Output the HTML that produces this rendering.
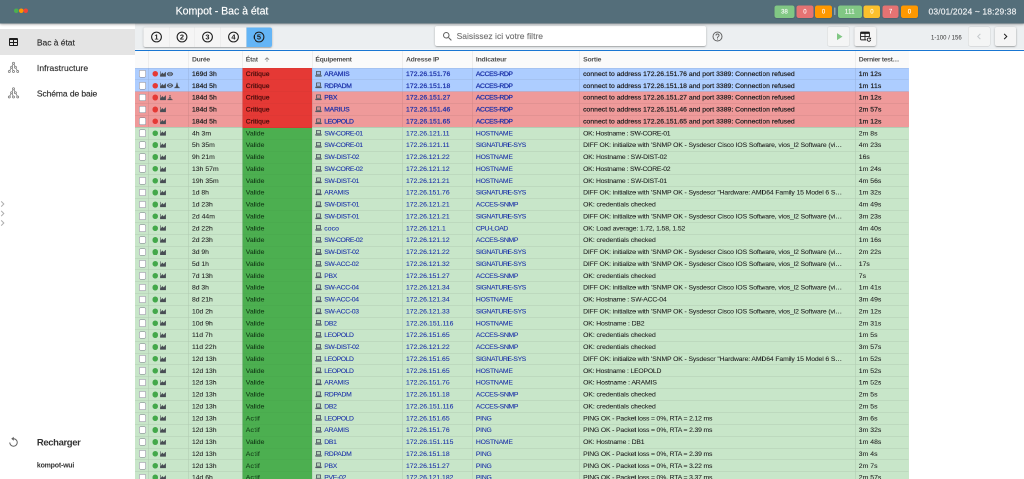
<!DOCTYPE html><html lang="fr"><head><meta charset="utf-8"><title>Kompot - Bac à état</title><style>html,body{margin:0;padding:0;background:#fff}
body{width:1024px;height:479px;overflow:hidden;position:relative}
#app{position:absolute;left:0;top:0;width:2048px;height:958px;transform:scale(.5);transform-origin:0 0;will-change:transform;overflow:hidden;background:#fff;font-family:"Liberation Sans",sans-serif;color:#1d1d1d;-webkit-font-smoothing:antialiased}
#app *{box-sizing:border-box}
.ic{display:block;flex:none}
i{display:block;font-style:normal}
span{white-space:pre}
/* header */
.hdr{position:absolute;left:0;top:0;width:2048px;height:47.4px;background:#546e7a;box-shadow:0 1px 4px rgba(0,0,0,.3),0 2px 7px rgba(0,0,0,.16)}
.hd{position:absolute;top:17.3px;width:9px;height:9px;border-radius:50%}
.title{position:absolute;left:351.2px;top:0;height:44px;line-height:44px;font-size:21.2px;color:#fff;-webkit-text-stroke:.3px;word-spacing:0}
.bdg{position:absolute;top:10.5px;height:25.7px;line-height:25.7px;border-radius:4.5px;text-align:center;font-size:12px;color:rgba(255,255,255,.9);-webkit-text-stroke:.3px;box-shadow:0 1px 3px rgba(0,0,0,.18)}
.sep{position:absolute;left:1668.3px;top:15px;width:3px;height:14.5px;background:#90a4ae;border-radius:1px}
.date{position:absolute;left:1857px;top:.7px;-webkit-text-stroke:.35px;height:46px;line-height:46px;font-size:17px;color:#eceff1}
/* drawer */
.drawer{position:absolute;left:0;top:47.4px;width:270px;height:911px;background:#fff}
.nav{position:absolute;left:0;top:11px;width:270px}
.nitem{height:51.2px;display:flex;align-items:center;position:relative}
.nitem.act{background:#e4e4e4}
.nic{position:absolute;left:15px;top:50%;margin-top:-12px;width:24px;height:24px}
.ntx{position:absolute;left:73.8px;top:1.2px;-webkit-text-stroke:.3px;line-height:51px;font-size:17px;color:#2e2e2e}
.minichev{position:absolute;left:-1px}
.reload{position:absolute;left:0;top:811px;width:270px;height:52px}
.rtx{position:absolute;left:73.8px;top:.9px;line-height:52px;font-size:19px;font-weight:700;color:#333}
.appname{position:absolute;left:73.8px;top:873px;line-height:20px;font-size:14px;font-weight:700;color:#333}
/* toolbar */
.toolbar{position:absolute;left:270px;top:47.4px;width:1778px;height:52px;background:#eceff1}
.bline{position:absolute;left:270px;top:99.7px;width:1778px;height:2.2px;background:#1976d2}
.bgroup{position:absolute;left:17.4px;top:7.2px;height:39.2px;width:256.2px;display:flex;border-radius:4px;background:#f5f5f5;box-shadow:0 1px 5px rgba(0,0,0,.2),0 2px 2px rgba(0,0,0,.14),0 3px 1px -2px rgba(0,0,0,.12);overflow:hidden}
.gb{flex:1;display:flex;align-items:center;justify-content:center;border-right:1px solid #e4e4e4}
.gb:last-child{border-right:0}
.gb.on{background:#64b5f6}
.search{position:absolute;left:600px;top:5.1px;width:542px;height:40px;background:#fff;border-radius:4px;box-shadow:0 1px 5px rgba(0,0,0,.2),0 2px 2px rgba(0,0,0,.14),0 3px 1px -2px rgba(0,0,0,.12);display:flex;align-items:center;padding:1.8px 0 0 13px}
.ph{font-size:17px;color:#6f6f6f;margin-left:6.2px;-webkit-text-stroke:.25px}
.help{position:absolute;left:1152.6px;top:13.6px;width:24px;height:24px}
.tb{position:absolute;top:6.4px;height:38.7px;border-radius:4px;background:#f5f5f5;box-shadow:0 1px 5px rgba(0,0,0,.2),0 2px 2px rgba(0,0,0,.14),0 3px 1px -2px rgba(0,0,0,.12);display:flex;align-items:center;justify-content:center}
.tb.flat{top:7.1px;height:38px;background:#f4f5f5;box-shadow:0 0 0 1px rgba(0,0,0,.1),0 1px 2px rgba(0,0,0,.06)}
.tb{margin-left:-270px}
.pag{position:absolute;left:1592px;top:17.4px;line-height:20px;font-size:12px;color:#333}
/* table */
.tbl{position:absolute;left:270px;top:102px;width:1547.5px;height:856px;background:linear-gradient(to bottom,#fafafa 0,#fafafa 33.6px,#adcdff 33.6px,#adcdff 81.10px,#ef9a9a 81.10px,#ef9a9a 152.35px,#c8e6c9 152.35px)}
.thead{display:flex;height:33.6px}
.th{flex:none;height:33.6px;line-height:33px;padding-left:6px;font-size:13.62px;font-weight:700;color:#505050;border-left:1px solid rgba(0,0,0,.1);display:flex;align-items:center;overflow:hidden}
.th:first-child,.td:first-child{border-left:0}
.tr{display:flex;height:23.75px}
.td{flex:none;height:23.75px;line-height:23.75px;padding-left:6px;font-size:13.62px;border-left:1px solid rgba(0,0,0,.13);border-top:1px solid rgba(0,0,0,.11);display:flex;align-items:center;overflow:hidden;color:#1f1f1f}
.cbx{padding-left:7.5px}
.cb{width:14.4px;height:14.4px;border:1.7px solid #7c7c8c;border-radius:3px;background:#fff}
.dot{width:11.4px;height:11.4px;border-radius:50%;margin-right:3px;flex:none}
.dr{background:#e53935}.dg{background:#43a84a}
.ecrit{color:#4a0d0c;border-top-color:rgba(0,0,0,.05)}
.eok{color:#123a16;border-top-color:rgba(0,0,0,.05)}
.td{-webkit-text-stroke:.15px;padding-bottom:.6px}
.td.lk{color:#1a30a8}
.crit .td{-webkit-text-stroke:.45px}
.lap{margin-right:4.4px;margin-left:-.8px}
.ecol{position:absolute;left:214.5px;top:33.6px;width:139.3px;height:823px;background:linear-gradient(to bottom,#e53935 0,#e53935 118.75px,#4caf50 118.75px)}
.thead,.tr{position:relative}
.ics{padding-left:7px}
</style></head><body><div id="app"><aside class="drawer"><div class="nav"><div class="nitem act"><div class="nic"><svg class="ic" width="24" height="24" viewBox="0 0 24 24" ><path fill="#1d1d1d" d="M5,4H19A2,2 0 0,1 21,6V18A2,2 0 0,1 19,20H5A2,2 0 0,1 3,18V6A2,2 0 0,1 5,4M5,8V12H11V8H5M13,8V12H19V8H13M5,14V18H11V14H5M13,14V18H19V14H13Z"/></svg></div><span class="ntx" style="letter-spacing:-0.075px;">Bac à état</span></div><div class="nitem"><div class="nic"><svg class="ic" width="24" height="24" viewBox="0 0 24 24" fill="none" stroke="#757575" stroke-width="1.5"><circle cx="12" cy="3.6" r="2"/><circle cx="8.2" cy="11.4" r="2"/><circle cx="15.8" cy="11.4" r="2"/><circle cx="3.6" cy="20" r="2"/><circle cx="12" cy="20" r="2"/><circle cx="20.4" cy="20" r="2"/><path d="M11.1,5.4L9,9.6M12.9,5.4L15,9.6M7.3,13.2L4.5,18.2M9.1,13.2L11.3,18.2M16.7,13.2L19.5,18.2"/></svg></div><span class="ntx" style="letter-spacing:0.169px;">Infrastructure</span></div><div class="nitem"><div class="nic"><svg class="ic" width="24" height="24" viewBox="0 0 24 24" fill="none" stroke="#757575" stroke-width="1.5"><circle cx="12" cy="3.6" r="2"/><circle cx="8.2" cy="11.4" r="2"/><circle cx="15.8" cy="11.4" r="2"/><circle cx="3.6" cy="20" r="2"/><circle cx="12" cy="20" r="2"/><circle cx="20.4" cy="20" r="2"/><path d="M11.1,5.4L9,9.6M12.9,5.4L15,9.6M7.3,13.2L4.5,18.2M9.1,13.2L11.3,18.2M16.7,13.2L19.5,18.2"/></svg></div><span class="ntx" style="letter-spacing:-0.169px;">Schéma de baie</span></div></div><svg class="minichev" style="top:354.3px" width="12" height="12" viewBox="0 0 12 12"><path d="M3.4,0.8L8.6,6L3.4,11.2" fill="none" stroke="#adadad" stroke-width="2"/></svg><svg class="minichev" style="top:373.8px" width="12" height="12" viewBox="0 0 12 12"><path d="M3.4,0.8L8.6,6L3.4,11.2" fill="none" stroke="#adadad" stroke-width="2"/></svg><svg class="minichev" style="top:393.0px" width="12" height="12" viewBox="0 0 12 12"><path d="M3.4,0.8L8.6,6L3.4,11.2" fill="none" stroke="#adadad" stroke-width="2"/></svg><div class="reload"><div class="nic"><svg class="ic" width="24" height="24" viewBox="0 0 24 24"><path fill="none" stroke="#616161" stroke-width="2" d="M12,5.5A7.5,7.5 0 1,1 4.5,13"/><path fill="#616161" d="M12.5,1.5V9.5L7.5,5.5Z"/></svg></div><span class="rtx" style="letter-spacing:-0.771px;">Recharger</span></div><div class="appname"><span style="letter-spacing:-0.412px;">kompot-wui</span></div></aside><div class="toolbar"><div class="bgroup"><div class="gb"><svg class="ic" width="26" height="26" viewBox="0 0 24 24"><circle cx="12" cy="12" r="9" fill="none" stroke="#1d1d1d" stroke-width="2"/><text x="12" y="16.9" text-anchor="middle" font-family='"Liberation Sans", sans-serif' font-size="13.8" font-weight="700" fill="#1d1d1d">1</text></svg></div><div class="gb"><svg class="ic" width="26" height="26" viewBox="0 0 24 24"><circle cx="12" cy="12" r="9" fill="none" stroke="#1d1d1d" stroke-width="2"/><text x="12" y="16.9" text-anchor="middle" font-family='"Liberation Sans", sans-serif' font-size="13.8" font-weight="700" fill="#1d1d1d">2</text></svg></div><div class="gb"><svg class="ic" width="26" height="26" viewBox="0 0 24 24"><circle cx="12" cy="12" r="9" fill="none" stroke="#1d1d1d" stroke-width="2"/><text x="12" y="16.9" text-anchor="middle" font-family='"Liberation Sans", sans-serif' font-size="13.8" font-weight="700" fill="#1d1d1d">3</text></svg></div><div class="gb"><svg class="ic" width="26" height="26" viewBox="0 0 24 24"><circle cx="12" cy="12" r="9" fill="none" stroke="#1d1d1d" stroke-width="2"/><text x="12" y="16.9" text-anchor="middle" font-family='"Liberation Sans", sans-serif' font-size="13.8" font-weight="700" fill="#1d1d1d">4</text></svg></div><div class="gb on"><svg class="ic" width="26" height="26" viewBox="0 0 24 24"><circle cx="12" cy="12" r="9" fill="none" stroke="#1d1d1d" stroke-width="2"/><text x="12" y="16.9" text-anchor="middle" font-family='"Liberation Sans", sans-serif' font-size="13.8" font-weight="700" fill="#1d1d1d">5</text></svg></div></div><div class="search"><svg class="ic" width="24" height="24" viewBox="0 0 24 24" ><path fill="#616161" d="M9.5,3A6.5,6.5 0 0,1 16,9.5C16,11.11 15.41,12.59 14.44,13.73L14.71,14H15.5L20.5,19L19,20.5L14,15.5V14.71L13.73,14.44C12.59,15.41 11.11,16 9.5,16A6.5,6.5 0 0,1 3,9.5A6.5,6.5 0 0,1 9.5,3M9.5,5C7,5 5,7 5,9.5C5,12 7,14 9.5,14C12,14 14,12 14,9.5C14,7 12,5 9.5,5Z"/></svg><span class="ph" style="letter-spacing:0.038px;">Saisissez ici votre filtre</span></div><div class="help"><svg class="ic" width="24" height="24" viewBox="0 0 24 24" ><path fill="#616161" d="M11,18H13V16H11V18M12,2A10,10 0 0,0 2,12A10,10 0 0,0 12,22A10,10 0 0,0 22,12A10,10 0 0,0 12,2M12,20C7.59,20 4,16.41 4,12C4,7.59 7.59,4 12,4C16.41,4 20,7.59 20,12C20,16.41 16.41,20 12,20M12,6A4,4 0 0,0 8,10H10A2,2 0 0,1 12,8A2,2 0 0,1 14,10C14,12 11,11.75 11,15H13C13,12.75 16,12.5 16,10A4,4 0 0,0 12,6Z"/></svg></div><div class="tb flat" style="left:1655px;width:44px"><svg class="ic" width="24" height="24" viewBox="0 0 24 24" style="margin-left:1.4px"><path fill="#81c784" d="M8,5.14V19.14L19,12.14L8,5.14Z"/></svg></div><div class="tb" style="left:1709px;width:43px"><svg class="ic" width="26" height="26" viewBox="0 0 24 24" style="margin:-2px 0 0 -1px"><path fill="#1d1d1d" d="M5,4H19A2,2 0 0,1 21,6V18A2,2 0 0,1 19,20H5A2,2 0 0,1 3,18V6A2,2 0 0,1 5,4M4.7,8V12.2H11.2V8H4.7M12.8,8V12.2H19.3V8H12.8M4.7,13.8V18.3H11.2V13.8H4.7M12.8,13.8V18.3H19.3V13.8H12.8Z"/><circle cx="19.2" cy="18.6" r="4.9" fill="#f5f5f5"/><path fill="none" stroke="#1d1d1d" stroke-width="1.6" d="M21.6,16.6A3.1,3.1 0 1,0 22.3,19.2"/><path fill="#1d1d1d" d="M23.2,14.2V18H19.4Z"/></svg></div><div class="pag"><span style="letter-spacing:0.065px;">1-100 / 156</span></div><div class="tb flat" style="left:1937px;width:42.5px"><svg class="ic" width="24" height="24" viewBox="0 0 24 24" ><path fill="#c4c9cc" d="M15.41,16.58L10.83,12L15.41,7.41L14,6L8,12L14,18L15.41,16.58Z"/></svg></div><div class="tb" style="left:1989.5px;width:42.5px"><svg class="ic" width="24" height="24" viewBox="0 0 24 24" ><path fill="#1d1d1d" d="M8.59,16.58L13.17,12L8.59,7.41L10,6L16,12L10,18L8.59,16.58Z"/></svg></div></div><div class="bline"></div><div class="tbl"><div class="ecol"></div><div class="thead"><div class="th" style="width:27px"></div><div class="th" style="width:80px"></div><div class="th" style="width:107.5px"><span style="letter-spacing:-0.572px;">Durée</span></div><div class="th" style="width:139.3px"><span style="letter-spacing:-0.406px;">État</span><svg class="ic" width="14" height="14" viewBox="0 0 24 24" style="margin-left:11px"><path fill="#6e6e6e" d="M13,20H11V8L5.5,13.5L4.08,12.08L12,4.16L19.92,12.08L18.5,13.5L13,8V20Z"/></svg></div><div class="th" style="width:181.2px"><span style="letter-spacing:-0.539px;">Équipement</span></div><div class="th" style="width:139.8px"><span style="letter-spacing:-0.447px;">Adresse IP</span></div><div class="th" style="width:214.4px"><span style="letter-spacing:-0.383px;">Indicateur</span></div><div class="th" style="width:551.3px"><span style="letter-spacing:-0.362px;">Sortie</span></div><div class="th" style="width:107px"><span style="letter-spacing:-0.672px;">Dernier test…</span></div></div><div class="tr b crit"><div class="td cbx" style="width:27px"><i class="cb"></i></div><div class="td ics" style="width:80px"><i class="dot dr"></i><svg class="ic" width="14" height="14" viewBox="0 0 24 24" ><path fill="#484d54" d="M2,3H4V14.5L9.5,7L15,12L20,4.5L22,6V21H2V3Z"/></svg><svg class="ic" width="14" height="14" viewBox="0 0 24 24" ><path fill="#484d54" d="M12,9A3,3 0 0,0 9,12A3,3 0 0,0 12,15A3,3 0 0,0 15,12A3,3 0 0,0 12,9M12,17A5,5 0 0,1 7,12A5,5 0 0,1 12,7A5,5 0 0,1 17,12A5,5 0 0,1 12,17M12,4.5C7,4.5 2.73,7.61 1,12C2.73,16.39 7,19.5 12,19.5C17,19.5 21.27,16.39 23,12C21.27,7.61 17,4.5 12,4.5Z"/></svg></div><div class="td" style="width:107.5px"><span style="letter-spacing:0.051px;">169d 3h</span></div><div class="td ecrit" style="width:139.3px"><span style="letter-spacing:0.104px;">Critique</span></div><div class="td lk" style="width:181.2px"><svg class="ic lap" width="14" height="14" viewBox="0 0 24 24"><path fill="#4f5862" fill-opacity=".15" d="M5,3H19V14H5Z"/><path fill="#4f5862" d="M5.5,1.5H18.5A2,2 0 0,1 20.5,3.5V15.6H3.5V3.5A2,2 0 0,1 5.5,1.5M6.4,4.4V13.2H17.6V4.4H6.4M1,16.4H23V19A2,2 0 0,1 21,21H3A2,2 0 0,1 1,19V16.4Z"/></svg><span style="letter-spacing:-0.26px;">ARAMIS</span></div><div class="td lk" style="width:139.8px"><span style="letter-spacing:0.127px;">172.26.151.76</span></div><div class="td lk" style="width:214.4px"><span style="letter-spacing:-0.752px;">ACCES-RDP</span></div><div class="td" style="width:551.3px"><span style="letter-spacing:0.063px;">connect to address 172.26.151.76 and port 3389: Connection refused</span></div><div class="td" style="width:107px"><span style="letter-spacing:0.135px;">1m 12s</span></div></div><div class="tr b crit"><div class="td cbx" style="width:27px"><i class="cb"></i></div><div class="td ics" style="width:80px"><i class="dot dr"></i><svg class="ic" width="14" height="14" viewBox="0 0 24 24" ><path fill="#484d54" d="M2,3H4V14.5L9.5,7L15,12L20,4.5L22,6V21H2V3Z"/></svg><svg class="ic" width="14" height="14" viewBox="0 0 24 24" ><path fill="#484d54" d="M12,9A3,3 0 0,0 9,12A3,3 0 0,0 12,15A3,3 0 0,0 15,12A3,3 0 0,0 12,9M12,17A5,5 0 0,1 7,12A5,5 0 0,1 12,7A5,5 0 0,1 17,12A5,5 0 0,1 12,17M12,4.5C7,4.5 2.73,7.61 1,12C2.73,16.39 7,19.5 12,19.5C17,19.5 21.27,16.39 23,12C21.27,7.61 17,4.5 12,4.5Z"/></svg><svg class="ic" width="14" height="14" viewBox="0 0 24 24" ><path fill="#484d54" d="M11,2H13L15.6,13.5L18.5,18.5H21.5V21H2.5V18.5H5.5L8.4,13.5L11,2Z"/></svg></div><div class="td" style="width:107.5px"><span style="letter-spacing:0.051px;">184d 5h</span></div><div class="td ecrit" style="width:139.3px"><span style="letter-spacing:0.104px;">Critique</span></div><div class="td lk" style="width:181.2px"><svg class="ic lap" width="14" height="14" viewBox="0 0 24 24"><path fill="#4f5862" fill-opacity=".15" d="M5,3H19V14H5Z"/><path fill="#4f5862" d="M5.5,1.5H18.5A2,2 0 0,1 20.5,3.5V15.6H3.5V3.5A2,2 0 0,1 5.5,1.5M6.4,4.4V13.2H17.6V4.4H6.4M1,16.4H23V19A2,2 0 0,1 21,21H3A2,2 0 0,1 1,19V16.4Z"/></svg><span style="letter-spacing:-0.505px;">RDPADM</span></div><div class="td lk" style="width:139.8px"><span style="letter-spacing:0.127px;">172.26.151.18</span></div><div class="td lk" style="width:214.4px"><span style="letter-spacing:-0.752px;">ACCES-RDP</span></div><div class="td" style="width:551.3px"><span style="letter-spacing:0.063px;">connect to address 172.26.151.18 and port 3389: Connection refused</span></div><div class="td" style="width:107px"><span style="letter-spacing:0.305px;">1m 11s</span></div></div><div class="tr r crit"><div class="td cbx" style="width:27px"><i class="cb"></i></div><div class="td ics" style="width:80px"><i class="dot dr"></i><svg class="ic" width="14" height="14" viewBox="0 0 24 24" ><path fill="#484d54" d="M2,3H4V14.5L9.5,7L15,12L20,4.5L22,6V21H2V3Z"/></svg><svg class="ic" width="14" height="14" viewBox="0 0 24 24" ><path fill="#484d54" d="M10.8,3.5H13.2L14.2,7H9.8L10.8,3.5M9.2,9H14.8L16,13H8L9.2,9M7.4,15H16.6L18,18.5H21V21H3V18.5H6L7.4,15Z"/></svg></div><div class="td" style="width:107.5px"><span style="letter-spacing:0.051px;">184d 5h</span></div><div class="td ecrit" style="width:139.3px"><span style="letter-spacing:0.104px;">Critique</span></div><div class="td lk" style="width:181.2px"><svg class="ic lap" width="14" height="14" viewBox="0 0 24 24"><path fill="#4f5862" fill-opacity=".15" d="M5,3H19V14H5Z"/><path fill="#4f5862" d="M5.5,1.5H18.5A2,2 0 0,1 20.5,3.5V15.6H3.5V3.5A2,2 0 0,1 5.5,1.5M6.4,4.4V13.2H17.6V4.4H6.4M1,16.4H23V19A2,2 0 0,1 21,21H3A2,2 0 0,1 1,19V16.4Z"/></svg><span style="letter-spacing:-0.453px;">PBX</span></div><div class="td lk" style="width:139.8px"><span style="letter-spacing:0.127px;">172.26.151.27</span></div><div class="td lk" style="width:214.4px"><span style="letter-spacing:-0.752px;">ACCES-RDP</span></div><div class="td" style="width:551.3px"><span style="letter-spacing:0.063px;">connect to address 172.26.151.27 and port 3389: Connection refused</span></div><div class="td" style="width:107px"><span style="letter-spacing:0.135px;">1m 12s</span></div></div><div class="tr r crit"><div class="td cbx" style="width:27px"><i class="cb"></i></div><div class="td ics" style="width:80px"><i class="dot dr"></i><svg class="ic" width="14" height="14" viewBox="0 0 24 24" ><path fill="#484d54" d="M2,3H4V14.5L9.5,7L15,12L20,4.5L22,6V21H2V3Z"/></svg></div><div class="td" style="width:107.5px"><span style="letter-spacing:0.051px;">184d 5h</span></div><div class="td ecrit" style="width:139.3px"><span style="letter-spacing:0.104px;">Critique</span></div><div class="td lk" style="width:181.2px"><svg class="ic lap" width="14" height="14" viewBox="0 0 24 24"><path fill="#4f5862" fill-opacity=".15" d="M5,3H19V14H5Z"/><path fill="#4f5862" d="M5.5,1.5H18.5A2,2 0 0,1 20.5,3.5V15.6H3.5V3.5A2,2 0 0,1 5.5,1.5M6.4,4.4V13.2H17.6V4.4H6.4M1,16.4H23V19A2,2 0 0,1 21,21H3A2,2 0 0,1 1,19V16.4Z"/></svg><span style="letter-spacing:-0.385px;">MARIUS</span></div><div class="td lk" style="width:139.8px"><span style="letter-spacing:0.127px;">172.26.151.46</span></div><div class="td lk" style="width:214.4px"><span style="letter-spacing:-0.752px;">ACCES-RDP</span></div><div class="td" style="width:551.3px"><span style="letter-spacing:0.063px;">connect to address 172.26.151.46 and port 3389: Connection refused</span></div><div class="td" style="width:107px"><span style="letter-spacing:0.135px;">2m 57s</span></div></div><div class="tr r crit"><div class="td cbx" style="width:27px"><i class="cb"></i></div><div class="td ics" style="width:80px"><i class="dot dr"></i><svg class="ic" width="14" height="14" viewBox="0 0 24 24" ><path fill="#484d54" d="M2,3H4V14.5L9.5,7L15,12L20,4.5L22,6V21H2V3Z"/></svg></div><div class="td" style="width:107.5px"><span style="letter-spacing:0.051px;">184d 5h</span></div><div class="td ecrit" style="width:139.3px"><span style="letter-spacing:0.104px;">Critique</span></div><div class="td lk" style="width:181.2px"><svg class="ic lap" width="14" height="14" viewBox="0 0 24 24"><path fill="#4f5862" fill-opacity=".15" d="M5,3H19V14H5Z"/><path fill="#4f5862" d="M5.5,1.5H18.5A2,2 0 0,1 20.5,3.5V15.6H3.5V3.5A2,2 0 0,1 5.5,1.5M6.4,4.4V13.2H17.6V4.4H6.4M1,16.4H23V19A2,2 0 0,1 21,21H3A2,2 0 0,1 1,19V16.4Z"/></svg><span style="letter-spacing:-0.797px;">LEOPOLD</span></div><div class="td lk" style="width:139.8px"><span style="letter-spacing:0.127px;">172.26.151.65</span></div><div class="td lk" style="width:214.4px"><span style="letter-spacing:-0.752px;">ACCES-RDP</span></div><div class="td" style="width:551.3px"><span style="letter-spacing:0.063px;">connect to address 172.26.151.65 and port 3389: Connection refused</span></div><div class="td" style="width:107px"><span style="letter-spacing:0.135px;">1m 12s</span></div></div><div class="tr g"><div class="td cbx" style="width:27px"><i class="cb"></i></div><div class="td ics" style="width:80px"><i class="dot dg"></i><svg class="ic" width="14" height="14" viewBox="0 0 24 24" ><path fill="#484d54" d="M2,3H4V14.5L9.5,7L15,12L20,4.5L22,6V21H2V3Z"/></svg></div><div class="td" style="width:107.5px"><span style="letter-spacing:0.056px;">4h 3m</span></div><div class="td eok" style="width:139.3px"><span style="letter-spacing:0.076px;">Valide</span></div><div class="td lk" style="width:181.2px"><svg class="ic lap" width="14" height="14" viewBox="0 0 24 24"><path fill="#4f5862" fill-opacity=".15" d="M5,3H19V14H5Z"/><path fill="#4f5862" d="M5.5,1.5H18.5A2,2 0 0,1 20.5,3.5V15.6H3.5V3.5A2,2 0 0,1 5.5,1.5M6.4,4.4V13.2H17.6V4.4H6.4M1,16.4H23V19A2,2 0 0,1 21,21H3A2,2 0 0,1 1,19V16.4Z"/></svg><span style="letter-spacing:-0.828px;">SW-CORE-01</span></div><div class="td lk" style="width:139.8px"><span style="letter-spacing:0.095px;">172.26.121.11</span></div><div class="td lk" style="width:214.4px"><span style="letter-spacing:-0.439px;">HOSTNAME</span></div><div class="td" style="width:551.3px"><span style="letter-spacing:-0.449px;">OK: Hostname : SW-CORE-01</span></div><div class="td" style="width:107px"><span style="letter-spacing:0.116px;">2m 8s</span></div></div><div class="tr g"><div class="td cbx" style="width:27px"><i class="cb"></i></div><div class="td ics" style="width:80px"><i class="dot dg"></i><svg class="ic" width="14" height="14" viewBox="0 0 24 24" ><path fill="#484d54" d="M2,3H4V14.5L9.5,7L15,12L20,4.5L22,6V21H2V3Z"/></svg></div><div class="td" style="width:107.5px"><span style="letter-spacing:0.06px;">5h 35m</span></div><div class="td eok" style="width:139.3px"><span style="letter-spacing:0.076px;">Valide</span></div><div class="td lk" style="width:181.2px"><svg class="ic lap" width="14" height="14" viewBox="0 0 24 24"><path fill="#4f5862" fill-opacity=".15" d="M5,3H19V14H5Z"/><path fill="#4f5862" d="M5.5,1.5H18.5A2,2 0 0,1 20.5,3.5V15.6H3.5V3.5A2,2 0 0,1 5.5,1.5M6.4,4.4V13.2H17.6V4.4H6.4M1,16.4H23V19A2,2 0 0,1 21,21H3A2,2 0 0,1 1,19V16.4Z"/></svg><span style="letter-spacing:-0.828px;">SW-CORE-01</span></div><div class="td lk" style="width:139.8px"><span style="letter-spacing:0.095px;">172.26.121.11</span></div><div class="td lk" style="width:214.4px"><span style="letter-spacing:-0.784px;">SIGNATURE-SYS</span></div><div class="td" style="width:551.3px"><span style="letter-spacing:-0.217px;">DIFF OK: initialize with &#x27;SNMP OK - Sysdescr Cisco IOS Software, vios_l2 Software (vi…</span></div><div class="td" style="width:107px"><span style="letter-spacing:0.107px;">4m 23s</span></div></div><div class="tr g"><div class="td cbx" style="width:27px"><i class="cb"></i></div><div class="td ics" style="width:80px"><i class="dot dg"></i><svg class="ic" width="14" height="14" viewBox="0 0 24 24" ><path fill="#484d54" d="M2,3H4V14.5L9.5,7L15,12L20,4.5L22,6V21H2V3Z"/></svg></div><div class="td" style="width:107.5px"><span style="letter-spacing:0.06px;">9h 21m</span></div><div class="td eok" style="width:139.3px"><span style="letter-spacing:0.076px;">Valide</span></div><div class="td lk" style="width:181.2px"><svg class="ic lap" width="14" height="14" viewBox="0 0 24 24"><path fill="#4f5862" fill-opacity=".15" d="M5,3H19V14H5Z"/><path fill="#4f5862" d="M5.5,1.5H18.5A2,2 0 0,1 20.5,3.5V15.6H3.5V3.5A2,2 0 0,1 5.5,1.5M6.4,4.4V13.2H17.6V4.4H6.4M1,16.4H23V19A2,2 0 0,1 21,21H3A2,2 0 0,1 1,19V16.4Z"/></svg><span style="letter-spacing:-0.627px;">SW-DIST-02</span></div><div class="td lk" style="width:139.8px"><span style="letter-spacing:0.017px;">172.26.121.22</span></div><div class="td lk" style="width:214.4px"><span style="letter-spacing:-0.439px;">HOSTNAME</span></div><div class="td" style="width:551.3px"><span style="letter-spacing:-0.369px;">OK: Hostname : SW-DIST-02</span></div><div class="td" style="width:107px"><span style="letter-spacing:0.125px;">16s</span></div></div><div class="tr g"><div class="td cbx" style="width:27px"><i class="cb"></i></div><div class="td ics" style="width:80px"><i class="dot dg"></i><svg class="ic" width="14" height="14" viewBox="0 0 24 24" ><path fill="#484d54" d="M2,3H4V14.5L9.5,7L15,12L20,4.5L22,6V21H2V3Z"/></svg></div><div class="td" style="width:107.5px"><span style="letter-spacing:0.062px;">13h 57m</span></div><div class="td eok" style="width:139.3px"><span style="letter-spacing:0.076px;">Valide</span></div><div class="td lk" style="width:181.2px"><svg class="ic lap" width="14" height="14" viewBox="0 0 24 24"><path fill="#4f5862" fill-opacity=".15" d="M5,3H19V14H5Z"/><path fill="#4f5862" d="M5.5,1.5H18.5A2,2 0 0,1 20.5,3.5V15.6H3.5V3.5A2,2 0 0,1 5.5,1.5M6.4,4.4V13.2H17.6V4.4H6.4M1,16.4H23V19A2,2 0 0,1 21,21H3A2,2 0 0,1 1,19V16.4Z"/></svg><span style="letter-spacing:-0.828px;">SW-CORE-02</span></div><div class="td lk" style="width:139.8px"><span style="letter-spacing:0.017px;">172.26.121.12</span></div><div class="td lk" style="width:214.4px"><span style="letter-spacing:-0.439px;">HOSTNAME</span></div><div class="td" style="width:551.3px"><span style="letter-spacing:-0.449px;">OK: Hostname : SW-CORE-02</span></div><div class="td" style="width:107px"><span style="letter-spacing:0.107px;">1m 24s</span></div></div><div class="tr g"><div class="td cbx" style="width:27px"><i class="cb"></i></div><div class="td ics" style="width:80px"><i class="dot dg"></i><svg class="ic" width="14" height="14" viewBox="0 0 24 24" ><path fill="#484d54" d="M2,3H4V14.5L9.5,7L15,12L20,4.5L22,6V21H2V3Z"/></svg></div><div class="td" style="width:107.5px"><span style="letter-spacing:0.062px;">19h 35m</span></div><div class="td eok" style="width:139.3px"><span style="letter-spacing:0.076px;">Valide</span></div><div class="td lk" style="width:181.2px"><svg class="ic lap" width="14" height="14" viewBox="0 0 24 24"><path fill="#4f5862" fill-opacity=".15" d="M5,3H19V14H5Z"/><path fill="#4f5862" d="M5.5,1.5H18.5A2,2 0 0,1 20.5,3.5V15.6H3.5V3.5A2,2 0 0,1 5.5,1.5M6.4,4.4V13.2H17.6V4.4H6.4M1,16.4H23V19A2,2 0 0,1 21,21H3A2,2 0 0,1 1,19V16.4Z"/></svg><span style="letter-spacing:-0.627px;">SW-DIST-01</span></div><div class="td lk" style="width:139.8px"><span style="letter-spacing:0.017px;">172.26.121.21</span></div><div class="td lk" style="width:214.4px"><span style="letter-spacing:-0.439px;">HOSTNAME</span></div><div class="td" style="width:551.3px"><span style="letter-spacing:-0.369px;">OK: Hostname : SW-DIST-01</span></div><div class="td" style="width:107px"><span style="letter-spacing:0.107px;">4m 56s</span></div></div><div class="tr g"><div class="td cbx" style="width:27px"><i class="cb"></i></div><div class="td ics" style="width:80px"><i class="dot dg"></i><svg class="ic" width="14" height="14" viewBox="0 0 24 24" ><path fill="#484d54" d="M2,3H4V14.5L9.5,7L15,12L20,4.5L22,6V21H2V3Z"/></svg></div><div class="td" style="width:107.5px"><span style="letter-spacing:-0.041px;">1d 8h</span></div><div class="td eok" style="width:139.3px"><span style="letter-spacing:0.076px;">Valide</span></div><div class="td lk" style="width:181.2px"><svg class="ic lap" width="14" height="14" viewBox="0 0 24 24"><path fill="#4f5862" fill-opacity=".15" d="M5,3H19V14H5Z"/><path fill="#4f5862" d="M5.5,1.5H18.5A2,2 0 0,1 20.5,3.5V15.6H3.5V3.5A2,2 0 0,1 5.5,1.5M6.4,4.4V13.2H17.6V4.4H6.4M1,16.4H23V19A2,2 0 0,1 21,21H3A2,2 0 0,1 1,19V16.4Z"/></svg><span style="letter-spacing:-0.396px;">ARAMIS</span></div><div class="td lk" style="width:139.8px"><span style="letter-spacing:0.017px;">172.26.151.76</span></div><div class="td lk" style="width:214.4px"><span style="letter-spacing:-0.784px;">SIGNATURE-SYS</span></div><div class="td" style="width:551.3px"><span style="letter-spacing:-0.22px;">DIFF OK: initialize with &#x27;SNMP OK - Sysdescr &quot;Hardware: AMD64 Family 15 Model 6 S…</span></div><div class="td" style="width:107px"><span style="letter-spacing:0.107px;">1m 32s</span></div></div><div class="tr g"><div class="td cbx" style="width:27px"><i class="cb"></i></div><div class="td ics" style="width:80px"><i class="dot dg"></i><svg class="ic" width="14" height="14" viewBox="0 0 24 24" ><path fill="#484d54" d="M2,3H4V14.5L9.5,7L15,12L20,4.5L22,6V21H2V3Z"/></svg></div><div class="td" style="width:107.5px"><span style="letter-spacing:-0.023px;">1d 23h</span></div><div class="td eok" style="width:139.3px"><span style="letter-spacing:0.076px;">Valide</span></div><div class="td lk" style="width:181.2px"><svg class="ic lap" width="14" height="14" viewBox="0 0 24 24"><path fill="#4f5862" fill-opacity=".15" d="M5,3H19V14H5Z"/><path fill="#4f5862" d="M5.5,1.5H18.5A2,2 0 0,1 20.5,3.5V15.6H3.5V3.5A2,2 0 0,1 5.5,1.5M6.4,4.4V13.2H17.6V4.4H6.4M1,16.4H23V19A2,2 0 0,1 21,21H3A2,2 0 0,1 1,19V16.4Z"/></svg><span style="letter-spacing:-0.627px;">SW-DIST-01</span></div><div class="td lk" style="width:139.8px"><span style="letter-spacing:0.017px;">172.26.121.21</span></div><div class="td lk" style="width:214.4px"><span style="letter-spacing:-0.639px;">ACCES-SNMP</span></div><div class="td" style="width:551.3px"><span style="letter-spacing:-0.096px;">OK: credentials checked</span></div><div class="td" style="width:107px"><span style="letter-spacing:0.107px;">4m 49s</span></div></div><div class="tr g"><div class="td cbx" style="width:27px"><i class="cb"></i></div><div class="td ics" style="width:80px"><i class="dot dg"></i><svg class="ic" width="14" height="14" viewBox="0 0 24 24" ><path fill="#484d54" d="M2,3H4V14.5L9.5,7L15,12L20,4.5L22,6V21H2V3Z"/></svg></div><div class="td" style="width:107.5px"><span style="letter-spacing:0.089px;">2d 44m</span></div><div class="td eok" style="width:139.3px"><span style="letter-spacing:0.076px;">Valide</span></div><div class="td lk" style="width:181.2px"><svg class="ic lap" width="14" height="14" viewBox="0 0 24 24"><path fill="#4f5862" fill-opacity=".15" d="M5,3H19V14H5Z"/><path fill="#4f5862" d="M5.5,1.5H18.5A2,2 0 0,1 20.5,3.5V15.6H3.5V3.5A2,2 0 0,1 5.5,1.5M6.4,4.4V13.2H17.6V4.4H6.4M1,16.4H23V19A2,2 0 0,1 21,21H3A2,2 0 0,1 1,19V16.4Z"/></svg><span style="letter-spacing:-0.627px;">SW-DIST-01</span></div><div class="td lk" style="width:139.8px"><span style="letter-spacing:0.017px;">172.26.121.21</span></div><div class="td lk" style="width:214.4px"><span style="letter-spacing:-0.784px;">SIGNATURE-SYS</span></div><div class="td" style="width:551.3px"><span style="letter-spacing:-0.217px;">DIFF OK: initialize with &#x27;SNMP OK - Sysdescr Cisco IOS Software, vios_l2 Software (vi…</span></div><div class="td" style="width:107px"><span style="letter-spacing:0.107px;">3m 23s</span></div></div><div class="tr g"><div class="td cbx" style="width:27px"><i class="cb"></i></div><div class="td ics" style="width:80px"><i class="dot dg"></i><svg class="ic" width="14" height="14" viewBox="0 0 24 24" ><path fill="#484d54" d="M2,3H4V14.5L9.5,7L15,12L20,4.5L22,6V21H2V3Z"/></svg></div><div class="td" style="width:107.5px"><span style="letter-spacing:-0.023px;">2d 22h</span></div><div class="td eok" style="width:139.3px"><span style="letter-spacing:0.076px;">Valide</span></div><div class="td lk" style="width:181.2px"><svg class="ic lap" width="14" height="14" viewBox="0 0 24 24"><path fill="#4f5862" fill-opacity=".15" d="M5,3H19V14H5Z"/><path fill="#4f5862" d="M5.5,1.5H18.5A2,2 0 0,1 20.5,3.5V15.6H3.5V3.5A2,2 0 0,1 5.5,1.5M6.4,4.4V13.2H17.6V4.4H6.4M1,16.4H23V19A2,2 0 0,1 21,21H3A2,2 0 0,1 1,19V16.4Z"/></svg><span style="letter-spacing:0.258px;">coco</span></div><div class="td lk" style="width:139.8px"><span style="letter-spacing:0.012px;">172.26.121.1</span></div><div class="td lk" style="width:214.4px"><span style="letter-spacing:-0.795px;">CPU-LOAD</span></div><div class="td" style="width:551.3px"><span style="letter-spacing:-0.25px;">OK: Load average: 1.72, 1.58, 1.52</span></div><div class="td" style="width:107px"><span style="letter-spacing:0.107px;">4m 40s</span></div></div><div class="tr g"><div class="td cbx" style="width:27px"><i class="cb"></i></div><div class="td ics" style="width:80px"><i class="dot dg"></i><svg class="ic" width="14" height="14" viewBox="0 0 24 24" ><path fill="#484d54" d="M2,3H4V14.5L9.5,7L15,12L20,4.5L22,6V21H2V3Z"/></svg></div><div class="td" style="width:107.5px"><span style="letter-spacing:-0.023px;">2d 23h</span></div><div class="td eok" style="width:139.3px"><span style="letter-spacing:0.076px;">Valide</span></div><div class="td lk" style="width:181.2px"><svg class="ic lap" width="14" height="14" viewBox="0 0 24 24"><path fill="#4f5862" fill-opacity=".15" d="M5,3H19V14H5Z"/><path fill="#4f5862" d="M5.5,1.5H18.5A2,2 0 0,1 20.5,3.5V15.6H3.5V3.5A2,2 0 0,1 5.5,1.5M6.4,4.4V13.2H17.6V4.4H6.4M1,16.4H23V19A2,2 0 0,1 21,21H3A2,2 0 0,1 1,19V16.4Z"/></svg><span style="letter-spacing:-0.828px;">SW-CORE-02</span></div><div class="td lk" style="width:139.8px"><span style="letter-spacing:0.017px;">172.26.121.12</span></div><div class="td lk" style="width:214.4px"><span style="letter-spacing:-0.639px;">ACCES-SNMP</span></div><div class="td" style="width:551.3px"><span style="letter-spacing:-0.096px;">OK: credentials checked</span></div><div class="td" style="width:107px"><span style="letter-spacing:0.107px;">1m 16s</span></div></div><div class="tr g"><div class="td cbx" style="width:27px"><i class="cb"></i></div><div class="td ics" style="width:80px"><i class="dot dg"></i><svg class="ic" width="14" height="14" viewBox="0 0 24 24" ><path fill="#484d54" d="M2,3H4V14.5L9.5,7L15,12L20,4.5L22,6V21H2V3Z"/></svg></div><div class="td" style="width:107.5px"><span style="letter-spacing:-0.041px;">3d 9h</span></div><div class="td eok" style="width:139.3px"><span style="letter-spacing:0.076px;">Valide</span></div><div class="td lk" style="width:181.2px"><svg class="ic lap" width="14" height="14" viewBox="0 0 24 24"><path fill="#4f5862" fill-opacity=".15" d="M5,3H19V14H5Z"/><path fill="#4f5862" d="M5.5,1.5H18.5A2,2 0 0,1 20.5,3.5V15.6H3.5V3.5A2,2 0 0,1 5.5,1.5M6.4,4.4V13.2H17.6V4.4H6.4M1,16.4H23V19A2,2 0 0,1 21,21H3A2,2 0 0,1 1,19V16.4Z"/></svg><span style="letter-spacing:-0.627px;">SW-DIST-02</span></div><div class="td lk" style="width:139.8px"><span style="letter-spacing:0.017px;">172.26.121.22</span></div><div class="td lk" style="width:214.4px"><span style="letter-spacing:-0.784px;">SIGNATURE-SYS</span></div><div class="td" style="width:551.3px"><span style="letter-spacing:-0.217px;">DIFF OK: initialize with &#x27;SNMP OK - Sysdescr Cisco IOS Software, vios_l2 Software (vi…</span></div><div class="td" style="width:107px"><span style="letter-spacing:0.107px;">2m 22s</span></div></div><div class="tr g"><div class="td cbx" style="width:27px"><i class="cb"></i></div><div class="td ics" style="width:80px"><i class="dot dg"></i><svg class="ic" width="14" height="14" viewBox="0 0 24 24" ><path fill="#484d54" d="M2,3H4V14.5L9.5,7L15,12L20,4.5L22,6V21H2V3Z"/></svg></div><div class="td" style="width:107.5px"><span style="letter-spacing:-0.041px;">5d 1h</span></div><div class="td eok" style="width:139.3px"><span style="letter-spacing:0.076px;">Valide</span></div><div class="td lk" style="width:181.2px"><svg class="ic lap" width="14" height="14" viewBox="0 0 24 24"><path fill="#4f5862" fill-opacity=".15" d="M5,3H19V14H5Z"/><path fill="#4f5862" d="M5.5,1.5H18.5A2,2 0 0,1 20.5,3.5V15.6H3.5V3.5A2,2 0 0,1 5.5,1.5M6.4,4.4V13.2H17.6V4.4H6.4M1,16.4H23V19A2,2 0 0,1 21,21H3A2,2 0 0,1 1,19V16.4Z"/></svg><span style="letter-spacing:-0.613px;">SW-ACC-02</span></div><div class="td lk" style="width:139.8px"><span style="letter-spacing:0.017px;">172.26.121.32</span></div><div class="td lk" style="width:214.4px"><span style="letter-spacing:-0.784px;">SIGNATURE-SYS</span></div><div class="td" style="width:551.3px"><span style="letter-spacing:-0.217px;">DIFF OK: initialize with &#x27;SNMP OK - Sysdescr Cisco IOS Software, vios_l2 Software (vi…</span></div><div class="td" style="width:107px"><span style="letter-spacing:0.125px;">17s</span></div></div><div class="tr g"><div class="td cbx" style="width:27px"><i class="cb"></i></div><div class="td ics" style="width:80px"><i class="dot dg"></i><svg class="ic" width="14" height="14" viewBox="0 0 24 24" ><path fill="#484d54" d="M2,3H4V14.5L9.5,7L15,12L20,4.5L22,6V21H2V3Z"/></svg></div><div class="td" style="width:107.5px"><span style="letter-spacing:-0.023px;">7d 13h</span></div><div class="td eok" style="width:139.3px"><span style="letter-spacing:0.076px;">Valide</span></div><div class="td lk" style="width:181.2px"><svg class="ic lap" width="14" height="14" viewBox="0 0 24 24"><path fill="#4f5862" fill-opacity=".15" d="M5,3H19V14H5Z"/><path fill="#4f5862" d="M5.5,1.5H18.5A2,2 0 0,1 20.5,3.5V15.6H3.5V3.5A2,2 0 0,1 5.5,1.5M6.4,4.4V13.2H17.6V4.4H6.4M1,16.4H23V19A2,2 0 0,1 21,21H3A2,2 0 0,1 1,19V16.4Z"/></svg><span style="letter-spacing:-0.542px;">PBX</span></div><div class="td lk" style="width:139.8px"><span style="letter-spacing:0.017px;">172.26.151.27</span></div><div class="td lk" style="width:214.4px"><span style="letter-spacing:-0.639px;">ACCES-SNMP</span></div><div class="td" style="width:551.3px"><span style="letter-spacing:-0.096px;">OK: credentials checked</span></div><div class="td" style="width:107px"><span style="letter-spacing:0.156px;">7s</span></div></div><div class="tr g"><div class="td cbx" style="width:27px"><i class="cb"></i></div><div class="td ics" style="width:80px"><i class="dot dg"></i><svg class="ic" width="14" height="14" viewBox="0 0 24 24" ><path fill="#484d54" d="M2,3H4V14.5L9.5,7L15,12L20,4.5L22,6V21H2V3Z"/></svg></div><div class="td" style="width:107.5px"><span style="letter-spacing:-0.041px;">8d 3h</span></div><div class="td eok" style="width:139.3px"><span style="letter-spacing:0.076px;">Valide</span></div><div class="td lk" style="width:181.2px"><svg class="ic lap" width="14" height="14" viewBox="0 0 24 24"><path fill="#4f5862" fill-opacity=".15" d="M5,3H19V14H5Z"/><path fill="#4f5862" d="M5.5,1.5H18.5A2,2 0 0,1 20.5,3.5V15.6H3.5V3.5A2,2 0 0,1 5.5,1.5M6.4,4.4V13.2H17.6V4.4H6.4M1,16.4H23V19A2,2 0 0,1 21,21H3A2,2 0 0,1 1,19V16.4Z"/></svg><span style="letter-spacing:-0.613px;">SW-ACC-04</span></div><div class="td lk" style="width:139.8px"><span style="letter-spacing:0.017px;">172.26.121.34</span></div><div class="td lk" style="width:214.4px"><span style="letter-spacing:-0.784px;">SIGNATURE-SYS</span></div><div class="td" style="width:551.3px"><span style="letter-spacing:-0.217px;">DIFF OK: initialize with &#x27;SNMP OK - Sysdescr Cisco IOS Software, vios_l2 Software (vi…</span></div><div class="td" style="width:107px"><span style="letter-spacing:0.107px;">1m 41s</span></div></div><div class="tr g"><div class="td cbx" style="width:27px"><i class="cb"></i></div><div class="td ics" style="width:80px"><i class="dot dg"></i><svg class="ic" width="14" height="14" viewBox="0 0 24 24" ><path fill="#484d54" d="M2,3H4V14.5L9.5,7L15,12L20,4.5L22,6V21H2V3Z"/></svg></div><div class="td" style="width:107.5px"><span style="letter-spacing:-0.023px;">8d 21h</span></div><div class="td eok" style="width:139.3px"><span style="letter-spacing:0.076px;">Valide</span></div><div class="td lk" style="width:181.2px"><svg class="ic lap" width="14" height="14" viewBox="0 0 24 24"><path fill="#4f5862" fill-opacity=".15" d="M5,3H19V14H5Z"/><path fill="#4f5862" d="M5.5,1.5H18.5A2,2 0 0,1 20.5,3.5V15.6H3.5V3.5A2,2 0 0,1 5.5,1.5M6.4,4.4V13.2H17.6V4.4H6.4M1,16.4H23V19A2,2 0 0,1 21,21H3A2,2 0 0,1 1,19V16.4Z"/></svg><span style="letter-spacing:-0.613px;">SW-ACC-04</span></div><div class="td lk" style="width:139.8px"><span style="letter-spacing:0.017px;">172.26.121.34</span></div><div class="td lk" style="width:214.4px"><span style="letter-spacing:-0.439px;">HOSTNAME</span></div><div class="td" style="width:551.3px"><span style="letter-spacing:-0.353px;">OK: Hostname : SW-ACC-04</span></div><div class="td" style="width:107px"><span style="letter-spacing:0.107px;">3m 49s</span></div></div><div class="tr g"><div class="td cbx" style="width:27px"><i class="cb"></i></div><div class="td ics" style="width:80px"><i class="dot dg"></i><svg class="ic" width="14" height="14" viewBox="0 0 24 24" ><path fill="#484d54" d="M2,3H4V14.5L9.5,7L15,12L20,4.5L22,6V21H2V3Z"/></svg></div><div class="td" style="width:107.5px"><span style="letter-spacing:-0.023px;">10d 2h</span></div><div class="td eok" style="width:139.3px"><span style="letter-spacing:0.076px;">Valide</span></div><div class="td lk" style="width:181.2px"><svg class="ic lap" width="14" height="14" viewBox="0 0 24 24"><path fill="#4f5862" fill-opacity=".15" d="M5,3H19V14H5Z"/><path fill="#4f5862" d="M5.5,1.5H18.5A2,2 0 0,1 20.5,3.5V15.6H3.5V3.5A2,2 0 0,1 5.5,1.5M6.4,4.4V13.2H17.6V4.4H6.4M1,16.4H23V19A2,2 0 0,1 21,21H3A2,2 0 0,1 1,19V16.4Z"/></svg><span style="letter-spacing:-0.613px;">SW-ACC-03</span></div><div class="td lk" style="width:139.8px"><span style="letter-spacing:0.017px;">172.26.121.33</span></div><div class="td lk" style="width:214.4px"><span style="letter-spacing:-0.784px;">SIGNATURE-SYS</span></div><div class="td" style="width:551.3px"><span style="letter-spacing:-0.217px;">DIFF OK: initialize with &#x27;SNMP OK - Sysdescr Cisco IOS Software, vios_l2 Software (vi…</span></div><div class="td" style="width:107px"><span style="letter-spacing:0.107px;">2m 12s</span></div></div><div class="tr g"><div class="td cbx" style="width:27px"><i class="cb"></i></div><div class="td ics" style="width:80px"><i class="dot dg"></i><svg class="ic" width="14" height="14" viewBox="0 0 24 24" ><path fill="#484d54" d="M2,3H4V14.5L9.5,7L15,12L20,4.5L22,6V21H2V3Z"/></svg></div><div class="td" style="width:107.5px"><span style="letter-spacing:-0.023px;">10d 9h</span></div><div class="td eok" style="width:139.3px"><span style="letter-spacing:0.076px;">Valide</span></div><div class="td lk" style="width:181.2px"><svg class="ic lap" width="14" height="14" viewBox="0 0 24 24"><path fill="#4f5862" fill-opacity=".15" d="M5,3H19V14H5Z"/><path fill="#4f5862" d="M5.5,1.5H18.5A2,2 0 0,1 20.5,3.5V15.6H3.5V3.5A2,2 0 0,1 5.5,1.5M6.4,4.4V13.2H17.6V4.4H6.4M1,16.4H23V19A2,2 0 0,1 21,21H3A2,2 0 0,1 1,19V16.4Z"/></svg><span style="letter-spacing:-0.474px;">DB2</span></div><div class="td lk" style="width:139.8px"><span style="letter-spacing:0.094px;">172.26.151.116</span></div><div class="td lk" style="width:214.4px"><span style="letter-spacing:-0.439px;">HOSTNAME</span></div><div class="td" style="width:551.3px"><span style="letter-spacing:-0.243px;">OK: Hostname : DB2</span></div><div class="td" style="width:107px"><span style="letter-spacing:0.107px;">2m 31s</span></div></div><div class="tr g"><div class="td cbx" style="width:27px"><i class="cb"></i></div><div class="td ics" style="width:80px"><i class="dot dg"></i><svg class="ic" width="14" height="14" viewBox="0 0 24 24" ><path fill="#484d54" d="M2,3H4V14.5L9.5,7L15,12L20,4.5L22,6V21H2V3Z"/></svg></div><div class="td" style="width:107.5px"><span style="letter-spacing:0.146px;">11d 7h</span></div><div class="td eok" style="width:139.3px"><span style="letter-spacing:0.076px;">Valide</span></div><div class="td lk" style="width:181.2px"><svg class="ic lap" width="14" height="14" viewBox="0 0 24 24"><path fill="#4f5862" fill-opacity=".15" d="M5,3H19V14H5Z"/><path fill="#4f5862" d="M5.5,1.5H18.5A2,2 0 0,1 20.5,3.5V15.6H3.5V3.5A2,2 0 0,1 5.5,1.5M6.4,4.4V13.2H17.6V4.4H6.4M1,16.4H23V19A2,2 0 0,1 21,21H3A2,2 0 0,1 1,19V16.4Z"/></svg><span style="letter-spacing:-0.808px;">LEOPOLD</span></div><div class="td lk" style="width:139.8px"><span style="letter-spacing:0.017px;">172.26.151.65</span></div><div class="td lk" style="width:214.4px"><span style="letter-spacing:-0.639px;">ACCES-SNMP</span></div><div class="td" style="width:551.3px"><span style="letter-spacing:-0.096px;">OK: credentials checked</span></div><div class="td" style="width:107px"><span style="letter-spacing:0.116px;">1m 5s</span></div></div><div class="tr g"><div class="td cbx" style="width:27px"><i class="cb"></i></div><div class="td ics" style="width:80px"><i class="dot dg"></i><svg class="ic" width="14" height="14" viewBox="0 0 24 24" ><path fill="#484d54" d="M2,3H4V14.5L9.5,7L15,12L20,4.5L22,6V21H2V3Z"/></svg></div><div class="td" style="width:107.5px"><span style="letter-spacing:0.138px;">11d 22h</span></div><div class="td eok" style="width:139.3px"><span style="letter-spacing:0.076px;">Valide</span></div><div class="td lk" style="width:181.2px"><svg class="ic lap" width="14" height="14" viewBox="0 0 24 24"><path fill="#4f5862" fill-opacity=".15" d="M5,3H19V14H5Z"/><path fill="#4f5862" d="M5.5,1.5H18.5A2,2 0 0,1 20.5,3.5V15.6H3.5V3.5A2,2 0 0,1 5.5,1.5M6.4,4.4V13.2H17.6V4.4H6.4M1,16.4H23V19A2,2 0 0,1 21,21H3A2,2 0 0,1 1,19V16.4Z"/></svg><span style="letter-spacing:-0.627px;">SW-DIST-02</span></div><div class="td lk" style="width:139.8px"><span style="letter-spacing:0.017px;">172.26.121.22</span></div><div class="td lk" style="width:214.4px"><span style="letter-spacing:-0.639px;">ACCES-SNMP</span></div><div class="td" style="width:551.3px"><span style="letter-spacing:-0.096px;">OK: credentials checked</span></div><div class="td" style="width:107px"><span style="letter-spacing:0.107px;">3m 57s</span></div></div><div class="tr g"><div class="td cbx" style="width:27px"><i class="cb"></i></div><div class="td ics" style="width:80px"><i class="dot dg"></i><svg class="ic" width="14" height="14" viewBox="0 0 24 24" ><path fill="#484d54" d="M2,3H4V14.5L9.5,7L15,12L20,4.5L22,6V21H2V3Z"/></svg></div><div class="td" style="width:107.5px"><span style="letter-spacing:-0.007px;">12d 13h</span></div><div class="td eok" style="width:139.3px"><span style="letter-spacing:0.076px;">Valide</span></div><div class="td lk" style="width:181.2px"><svg class="ic lap" width="14" height="14" viewBox="0 0 24 24"><path fill="#4f5862" fill-opacity=".15" d="M5,3H19V14H5Z"/><path fill="#4f5862" d="M5.5,1.5H18.5A2,2 0 0,1 20.5,3.5V15.6H3.5V3.5A2,2 0 0,1 5.5,1.5M6.4,4.4V13.2H17.6V4.4H6.4M1,16.4H23V19A2,2 0 0,1 21,21H3A2,2 0 0,1 1,19V16.4Z"/></svg><span style="letter-spacing:-0.808px;">LEOPOLD</span></div><div class="td lk" style="width:139.8px"><span style="letter-spacing:0.017px;">172.26.151.65</span></div><div class="td lk" style="width:214.4px"><span style="letter-spacing:-0.784px;">SIGNATURE-SYS</span></div><div class="td" style="width:551.3px"><span style="letter-spacing:-0.22px;">DIFF OK: initialize with &#x27;SNMP OK - Sysdescr &quot;Hardware: AMD64 Family 15 Model 6 S…</span></div><div class="td" style="width:107px"><span style="letter-spacing:0.107px;">1m 52s</span></div></div><div class="tr g"><div class="td cbx" style="width:27px"><i class="cb"></i></div><div class="td ics" style="width:80px"><i class="dot dg"></i><svg class="ic" width="14" height="14" viewBox="0 0 24 24" ><path fill="#484d54" d="M2,3H4V14.5L9.5,7L15,12L20,4.5L22,6V21H2V3Z"/></svg></div><div class="td" style="width:107.5px"><span style="letter-spacing:-0.007px;">12d 13h</span></div><div class="td eok" style="width:139.3px"><span style="letter-spacing:0.076px;">Valide</span></div><div class="td lk" style="width:181.2px"><svg class="ic lap" width="14" height="14" viewBox="0 0 24 24"><path fill="#4f5862" fill-opacity=".15" d="M5,3H19V14H5Z"/><path fill="#4f5862" d="M5.5,1.5H18.5A2,2 0 0,1 20.5,3.5V15.6H3.5V3.5A2,2 0 0,1 5.5,1.5M6.4,4.4V13.2H17.6V4.4H6.4M1,16.4H23V19A2,2 0 0,1 21,21H3A2,2 0 0,1 1,19V16.4Z"/></svg><span style="letter-spacing:-0.808px;">LEOPOLD</span></div><div class="td lk" style="width:139.8px"><span style="letter-spacing:0.017px;">172.26.151.65</span></div><div class="td lk" style="width:214.4px"><span style="letter-spacing:-0.439px;">HOSTNAME</span></div><div class="td" style="width:551.3px"><span style="letter-spacing:-0.391px;">OK: Hostname : LEOPOLD</span></div><div class="td" style="width:107px"><span style="letter-spacing:0.107px;">1m 52s</span></div></div><div class="tr g"><div class="td cbx" style="width:27px"><i class="cb"></i></div><div class="td ics" style="width:80px"><i class="dot dg"></i><svg class="ic" width="14" height="14" viewBox="0 0 24 24" ><path fill="#484d54" d="M2,3H4V14.5L9.5,7L15,12L20,4.5L22,6V21H2V3Z"/></svg></div><div class="td" style="width:107.5px"><span style="letter-spacing:-0.007px;">12d 13h</span></div><div class="td eok" style="width:139.3px"><span style="letter-spacing:0.076px;">Valide</span></div><div class="td lk" style="width:181.2px"><svg class="ic lap" width="14" height="14" viewBox="0 0 24 24"><path fill="#4f5862" fill-opacity=".15" d="M5,3H19V14H5Z"/><path fill="#4f5862" d="M5.5,1.5H18.5A2,2 0 0,1 20.5,3.5V15.6H3.5V3.5A2,2 0 0,1 5.5,1.5M6.4,4.4V13.2H17.6V4.4H6.4M1,16.4H23V19A2,2 0 0,1 21,21H3A2,2 0 0,1 1,19V16.4Z"/></svg><span style="letter-spacing:-0.396px;">ARAMIS</span></div><div class="td lk" style="width:139.8px"><span style="letter-spacing:0.017px;">172.26.151.76</span></div><div class="td lk" style="width:214.4px"><span style="letter-spacing:-0.439px;">HOSTNAME</span></div><div class="td" style="width:551.3px"><span style="letter-spacing:-0.218px;">OK: Hostname : ARAMIS</span></div><div class="td" style="width:107px"><span style="letter-spacing:0.107px;">1m 52s</span></div></div><div class="tr g"><div class="td cbx" style="width:27px"><i class="cb"></i></div><div class="td ics" style="width:80px"><i class="dot dg"></i><svg class="ic" width="14" height="14" viewBox="0 0 24 24" ><path fill="#484d54" d="M2,3H4V14.5L9.5,7L15,12L20,4.5L22,6V21H2V3Z"/></svg></div><div class="td" style="width:107.5px"><span style="letter-spacing:-0.007px;">12d 13h</span></div><div class="td eok" style="width:139.3px"><span style="letter-spacing:0.076px;">Valide</span></div><div class="td lk" style="width:181.2px"><svg class="ic lap" width="14" height="14" viewBox="0 0 24 24"><path fill="#4f5862" fill-opacity=".15" d="M5,3H19V14H5Z"/><path fill="#4f5862" d="M5.5,1.5H18.5A2,2 0 0,1 20.5,3.5V15.6H3.5V3.5A2,2 0 0,1 5.5,1.5M6.4,4.4V13.2H17.6V4.4H6.4M1,16.4H23V19A2,2 0 0,1 21,21H3A2,2 0 0,1 1,19V16.4Z"/></svg><span style="letter-spacing:-0.547px;">RDPADM</span></div><div class="td lk" style="width:139.8px"><span style="letter-spacing:0.017px;">172.26.151.18</span></div><div class="td lk" style="width:214.4px"><span style="letter-spacing:-0.639px;">ACCES-SNMP</span></div><div class="td" style="width:551.3px"><span style="letter-spacing:-0.096px;">OK: credentials checked</span></div><div class="td" style="width:107px"><span style="letter-spacing:0.116px;">2m 5s</span></div></div><div class="tr g"><div class="td cbx" style="width:27px"><i class="cb"></i></div><div class="td ics" style="width:80px"><i class="dot dg"></i><svg class="ic" width="14" height="14" viewBox="0 0 24 24" ><path fill="#484d54" d="M2,3H4V14.5L9.5,7L15,12L20,4.5L22,6V21H2V3Z"/></svg></div><div class="td" style="width:107.5px"><span style="letter-spacing:-0.007px;">12d 13h</span></div><div class="td eok" style="width:139.3px"><span style="letter-spacing:0.076px;">Valide</span></div><div class="td lk" style="width:181.2px"><svg class="ic lap" width="14" height="14" viewBox="0 0 24 24"><path fill="#4f5862" fill-opacity=".15" d="M5,3H19V14H5Z"/><path fill="#4f5862" d="M5.5,1.5H18.5A2,2 0 0,1 20.5,3.5V15.6H3.5V3.5A2,2 0 0,1 5.5,1.5M6.4,4.4V13.2H17.6V4.4H6.4M1,16.4H23V19A2,2 0 0,1 21,21H3A2,2 0 0,1 1,19V16.4Z"/></svg><span style="letter-spacing:-0.474px;">DB2</span></div><div class="td lk" style="width:139.8px"><span style="letter-spacing:0.094px;">172.26.151.116</span></div><div class="td lk" style="width:214.4px"><span style="letter-spacing:-0.639px;">ACCES-SNMP</span></div><div class="td" style="width:551.3px"><span style="letter-spacing:-0.096px;">OK: credentials checked</span></div><div class="td" style="width:107px"><span style="letter-spacing:0.116px;">2m 5s</span></div></div><div class="tr g"><div class="td cbx" style="width:27px"><i class="cb"></i></div><div class="td ics" style="width:80px"><i class="dot dg"></i><svg class="ic" width="14" height="14" viewBox="0 0 24 24" ><path fill="#484d54" d="M2,3H4V14.5L9.5,7L15,12L20,4.5L22,6V21H2V3Z"/></svg></div><div class="td" style="width:107.5px"><span style="letter-spacing:-0.007px;">12d 13h</span></div><div class="td eok" style="width:139.3px"><span style="letter-spacing:0.406px;">Actif</span></div><div class="td lk" style="width:181.2px"><svg class="ic lap" width="14" height="14" viewBox="0 0 24 24"><path fill="#4f5862" fill-opacity=".15" d="M5,3H19V14H5Z"/><path fill="#4f5862" d="M5.5,1.5H18.5A2,2 0 0,1 20.5,3.5V15.6H3.5V3.5A2,2 0 0,1 5.5,1.5M6.4,4.4V13.2H17.6V4.4H6.4M1,16.4H23V19A2,2 0 0,1 21,21H3A2,2 0 0,1 1,19V16.4Z"/></svg><span style="letter-spacing:-0.808px;">LEOPOLD</span></div><div class="td lk" style="width:139.8px"><span style="letter-spacing:0.017px;">172.26.151.65</span></div><div class="td lk" style="width:214.4px"><span style="letter-spacing:-0.5px;">PING</span></div><div class="td" style="width:551.3px"><span style="letter-spacing:-0.291px;">PING OK - Packet loss = 0%, RTA = 2.12 ms</span></div><div class="td" style="width:107px"><span style="letter-spacing:0.116px;">3m 6s</span></div></div><div class="tr g"><div class="td cbx" style="width:27px"><i class="cb"></i></div><div class="td ics" style="width:80px"><i class="dot dg"></i><svg class="ic" width="14" height="14" viewBox="0 0 24 24" ><path fill="#484d54" d="M2,3H4V14.5L9.5,7L15,12L20,4.5L22,6V21H2V3Z"/></svg></div><div class="td" style="width:107.5px"><span style="letter-spacing:-0.007px;">12d 13h</span></div><div class="td eok" style="width:139.3px"><span style="letter-spacing:0.406px;">Actif</span></div><div class="td lk" style="width:181.2px"><svg class="ic lap" width="14" height="14" viewBox="0 0 24 24"><path fill="#4f5862" fill-opacity=".15" d="M5,3H19V14H5Z"/><path fill="#4f5862" d="M5.5,1.5H18.5A2,2 0 0,1 20.5,3.5V15.6H3.5V3.5A2,2 0 0,1 5.5,1.5M6.4,4.4V13.2H17.6V4.4H6.4M1,16.4H23V19A2,2 0 0,1 21,21H3A2,2 0 0,1 1,19V16.4Z"/></svg><span style="letter-spacing:-0.396px;">ARAMIS</span></div><div class="td lk" style="width:139.8px"><span style="letter-spacing:0.017px;">172.26.151.76</span></div><div class="td lk" style="width:214.4px"><span style="letter-spacing:-0.5px;">PING</span></div><div class="td" style="width:551.3px"><span style="letter-spacing:-0.291px;">PING OK - Packet loss = 0%, RTA = 2.39 ms</span></div><div class="td" style="width:107px"><span style="letter-spacing:0.107px;">3m 32s</span></div></div><div class="tr g"><div class="td cbx" style="width:27px"><i class="cb"></i></div><div class="td ics" style="width:80px"><i class="dot dg"></i><svg class="ic" width="14" height="14" viewBox="0 0 24 24" ><path fill="#484d54" d="M2,3H4V14.5L9.5,7L15,12L20,4.5L22,6V21H2V3Z"/></svg></div><div class="td" style="width:107.5px"><span style="letter-spacing:-0.007px;">12d 13h</span></div><div class="td eok" style="width:139.3px"><span style="letter-spacing:0.076px;">Valide</span></div><div class="td lk" style="width:181.2px"><svg class="ic lap" width="14" height="14" viewBox="0 0 24 24"><path fill="#4f5862" fill-opacity=".15" d="M5,3H19V14H5Z"/><path fill="#4f5862" d="M5.5,1.5H18.5A2,2 0 0,1 20.5,3.5V15.6H3.5V3.5A2,2 0 0,1 5.5,1.5M6.4,4.4V13.2H17.6V4.4H6.4M1,16.4H23V19A2,2 0 0,1 21,21H3A2,2 0 0,1 1,19V16.4Z"/></svg><span style="letter-spacing:-0.474px;">DB1</span></div><div class="td lk" style="width:139.8px"><span style="letter-spacing:0.094px;">172.26.151.115</span></div><div class="td lk" style="width:214.4px"><span style="letter-spacing:-0.439px;">HOSTNAME</span></div><div class="td" style="width:551.3px"><span style="letter-spacing:-0.243px;">OK: Hostname : DB1</span></div><div class="td" style="width:107px"><span style="letter-spacing:0.107px;">1m 48s</span></div></div><div class="tr g"><div class="td cbx" style="width:27px"><i class="cb"></i></div><div class="td ics" style="width:80px"><i class="dot dg"></i><svg class="ic" width="14" height="14" viewBox="0 0 24 24" ><path fill="#484d54" d="M2,3H4V14.5L9.5,7L15,12L20,4.5L22,6V21H2V3Z"/></svg></div><div class="td" style="width:107.5px"><span style="letter-spacing:-0.007px;">12d 13h</span></div><div class="td eok" style="width:139.3px"><span style="letter-spacing:0.406px;">Actif</span></div><div class="td lk" style="width:181.2px"><svg class="ic lap" width="14" height="14" viewBox="0 0 24 24"><path fill="#4f5862" fill-opacity=".15" d="M5,3H19V14H5Z"/><path fill="#4f5862" d="M5.5,1.5H18.5A2,2 0 0,1 20.5,3.5V15.6H3.5V3.5A2,2 0 0,1 5.5,1.5M6.4,4.4V13.2H17.6V4.4H6.4M1,16.4H23V19A2,2 0 0,1 21,21H3A2,2 0 0,1 1,19V16.4Z"/></svg><span style="letter-spacing:-0.547px;">RDPADM</span></div><div class="td lk" style="width:139.8px"><span style="letter-spacing:0.017px;">172.26.151.18</span></div><div class="td lk" style="width:214.4px"><span style="letter-spacing:-0.5px;">PING</span></div><div class="td" style="width:551.3px"><span style="letter-spacing:-0.291px;">PING OK - Packet loss = 0%, RTA = 2.39 ms</span></div><div class="td" style="width:107px"><span style="letter-spacing:0.116px;">3m 4s</span></div></div><div class="tr g"><div class="td cbx" style="width:27px"><i class="cb"></i></div><div class="td ics" style="width:80px"><i class="dot dg"></i><svg class="ic" width="14" height="14" viewBox="0 0 24 24" ><path fill="#484d54" d="M2,3H4V14.5L9.5,7L15,12L20,4.5L22,6V21H2V3Z"/></svg></div><div class="td" style="width:107.5px"><span style="letter-spacing:-0.007px;">12d 13h</span></div><div class="td eok" style="width:139.3px"><span style="letter-spacing:0.406px;">Actif</span></div><div class="td lk" style="width:181.2px"><svg class="ic lap" width="14" height="14" viewBox="0 0 24 24"><path fill="#4f5862" fill-opacity=".15" d="M5,3H19V14H5Z"/><path fill="#4f5862" d="M5.5,1.5H18.5A2,2 0 0,1 20.5,3.5V15.6H3.5V3.5A2,2 0 0,1 5.5,1.5M6.4,4.4V13.2H17.6V4.4H6.4M1,16.4H23V19A2,2 0 0,1 21,21H3A2,2 0 0,1 1,19V16.4Z"/></svg><span style="letter-spacing:-0.542px;">PBX</span></div><div class="td lk" style="width:139.8px"><span style="letter-spacing:0.017px;">172.26.151.27</span></div><div class="td lk" style="width:214.4px"><span style="letter-spacing:-0.5px;">PING</span></div><div class="td" style="width:551.3px"><span style="letter-spacing:-0.291px;">PING OK - Packet loss = 0%, RTA = 3.22 ms</span></div><div class="td" style="width:107px"><span style="letter-spacing:0.116px;">2m 7s</span></div></div><div class="tr g"><div class="td cbx" style="width:27px"><i class="cb"></i></div><div class="td ics" style="width:80px"><i class="dot dg"></i><svg class="ic" width="14" height="14" viewBox="0 0 24 24" ><path fill="#484d54" d="M2,3H4V14.5L9.5,7L15,12L20,4.5L22,6V21H2V3Z"/></svg></div><div class="td" style="width:107.5px"><span style="letter-spacing:-0.023px;">14d 6h</span></div><div class="td eok" style="width:139.3px"><span style="letter-spacing:0.406px;">Actif</span></div><div class="td lk" style="width:181.2px"><svg class="ic lap" width="14" height="14" viewBox="0 0 24 24"><path fill="#4f5862" fill-opacity=".15" d="M5,3H19V14H5Z"/><path fill="#4f5862" d="M5.5,1.5H18.5A2,2 0 0,1 20.5,3.5V15.6H3.5V3.5A2,2 0 0,1 5.5,1.5M6.4,4.4V13.2H17.6V4.4H6.4M1,16.4H23V19A2,2 0 0,1 21,21H3A2,2 0 0,1 1,19V16.4Z"/></svg><span style="letter-spacing:-0.477px;">PVE-02</span></div><div class="td lk" style="width:139.8px"><span style="letter-spacing:0.021px;">172.26.121.182</span></div><div class="td lk" style="width:214.4px"><span style="letter-spacing:-0.5px;">PING</span></div><div class="td" style="width:551.3px"><span style="letter-spacing:-0.291px;">PING OK - Packet loss = 0%, RTA = 3.37 ms</span></div><div class="td" style="width:107px"><span style="letter-spacing:0.107px;">2m 57s</span></div></div></div><header class="hdr"><i class="hd" style="left:28px;background:#4caf50"></i><i class="hd" style="left:38px;background:#ff9800"></i><i class="hd" style="left:47.3px;background:#f44336"></i><div class="title"><span style="letter-spacing:-0.096px;">Kompot - Bac à état</span></div><div class="bdg" style="left:1549px;width:40px;background:#81c784"><span style="letter-spacing:0.07px;">38</span></div><div class="bdg" style="left:1593px;width:33.5px;background:#e57373"><span style="letter-spacing:0.062px;">0</span></div><div class="bdg" style="left:1630.2px;width:33.8px;background:#ff9800"><span style="letter-spacing:0.062px;">0</span></div><div class="bdg" style="left:1676px;width:47.5px;background:#81c784"><span style="letter-spacing:0.661px;">111</span></div><div class="bdg" style="left:1727.2px;width:33.3px;background:#fbc02d"><span style="letter-spacing:0.062px;">0</span></div><div class="bdg" style="left:1765.2px;width:31.8px;background:#e57373"><span style="letter-spacing:0.062px;">7</span></div><div class="bdg" style="left:1802px;width:33.8px;background:#ff9800"><span style="letter-spacing:0.062px;">0</span></div><i class="sep"></i><div class="date"><span style="letter-spacing:0.257px;">03/01/2024 ~ 18:29:38</span></div></header></div></body></html>
